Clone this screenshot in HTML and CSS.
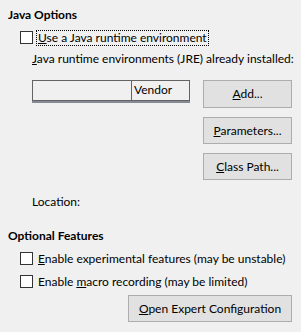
FILE: index.html
```html
<!DOCTYPE html>
<html lang="en">
<head>
    <meta charset="UTF-8">
    <title>Options - Advanced</title>
    <link rel="stylesheet" href="styles.css">
</head>
<body>
    <div class="dialog">
        <section class="group">
            <h2 class="group-title">Java Options</h2>
            <label class="check">
                <span class="box"></span>
                <span class="check-text focused"><u>U</u>se a Java runtime environment</span>
            </label>
            <div class="group-body">
                <p class="hint"><u>J</u>ava runtime environments (JRE) already installed:</p>
                <div class="jre-area">
                    <div class="jre-left">
                        <div class="jre-table">
                            <div class="col-name"></div>
                            <div class="col-vendor">Vendor</div>
                        </div>
                        <p class="location">Location:</p>
                    </div>
                    <div class="jre-buttons">
                        <button class="btn btn-add"><u>A</u>dd...</button>
                        <button class="btn"><u>P</u>arameters...</button>
                        <button class="btn"><u>C</u>lass Path...</button>
                    </div>
                </div>
            </div>
        </section>

        <section class="group optional">
            <h2 class="group-title">Optional Features</h2>
            <label class="check">
                <span class="box"></span>
                <span class="check-text"><u>E</u>nable experimental features (may be unstable)</span>
            </label>
            <label class="check">
                <span class="box"></span>
                <span class="check-text">Enable <u>m</u>acro recording (may be limited)</span>
            </label>
            <div class="actions">
                <button class="btn btn-expert"><u>O</u>pen Expert Configuration</button>
            </div>
        </section>
    </div>
</body>
</html>
```

FILE: styles.css
```css
* {
    margin: 0;
    padding: 0;
    box-sizing: border-box;
}

body {
    font-family: Lato, 'Open Sans', sans-serif;
    font-size: 12px;
    line-height: 16px;
    background: #f0f0f0;
    color: #000;
}

.dialog {
    width: 301px;
    padding: 7px 9px 0 8px;
    white-space: nowrap;
}

.group-title {
    font-size: 12px;
    font-weight: bold;
    line-height: 16px;
}

.check {
    display: flex;
    align-items: center;
    height: 17px;
    margin: 6px 0 0 12px;
}

.box {
    width: 13px;
    height: 13px;
    border: 1px solid #333;
    background: #fff;
    flex-shrink: 0;
}

.check-text {
    margin-left: 3px;
    padding: 0 1px;
    line-height: 14px;
    border: 1px solid transparent;
}

.check-text.focused {
    border: 1px dotted #000;
}

.group-body {
    padding-left: 24px;
}

.hint {
    margin-top: 5px;
}

.jre-area {
    display: flex;
    gap: 13px;
    margin-top: 13px;
}

.jre-left {
    width: 158px;
}

.jre-table {
    display: flex;
    height: 21px;
    border: 1px solid #646464;
    box-shadow: 0 2px 0 #838a93;
}

.col-name {
    width: 99px;
    border-right: 1px solid #646464;
}

.col-vendor {
    padding: 1px 0 0 2px;
}

.location {
    margin-top: 93px;
}

.jre-buttons {
    display: flex;
    flex-direction: column;
    gap: 9px;
}

.btn {
    width: 89px;
    height: 27px;
    font: inherit;
    color: #000;
    background: #e1e1e1;
    border: 1px solid #adadad;
    text-align: center;
}

.btn-add {
    height: 28px;
}

.optional {
    margin-top: 18px;
}

.actions {
    display: flex;
    justify-content: flex-end;
    margin-top: 5px;
}

.btn-expert {
    width: 164px;
}
```
